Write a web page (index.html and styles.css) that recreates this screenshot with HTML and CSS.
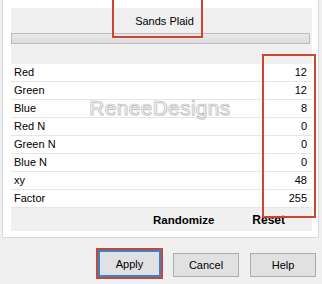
FILE: index.html
```html
<!DOCTYPE html>
<html lang="en">
<head>
    <meta charset="utf-8"/>
    <title>Sands Plaid</title>
    <link rel="stylesheet" href="styles.css">
</head>
<body>
<div class="page">
    <div class="panel">
        <div class="head">
            <div class="title">Sands Plaid</div>
            <div class="bar"></div>
        </div>
        <ul class="params">
            <li><span>Red</span><span>12</span></li>
            <li><span>Green</span><span>12</span></li>
            <li><span>Blue</span><span>8</span></li>
            <li><span>Red N</span><span>0</span></li>
            <li><span>Green N</span><span>0</span></li>
            <li><span>Blue N</span><span>0</span></li>
            <li><span>xy</span><span>48</span></li>
            <li><span>Factor</span><span>255</span></li>
        </ul>
        <div class="actions">
            <span class="randomize">Randomize</span>
            <span class="reset">Reset</span>
        </div>
    </div>
    <!-- watermark over the list -->
    <div class="watermark">ReneeDesigns</div>
</div>

<div class="buttons">
    <button class="btn btn-apply">Apply</button>
    <button class="btn">Cancel</button>
    <button class="btn">Help</button>
</div>

<!-- red annotation frames -->
<div class="mark mark-title"></div>
<div class="mark mark-values"></div>
</body>
</html>
```

FILE: styles.css
```css
* {
    box-sizing: border-box;
}

body {
    margin: 0;
    background-color: #f0f0f0;
    font-family: "Liberation Sans", Arial, sans-serif;
    font-size: 11px;
    color: #000;
    position: relative;
    overflow: hidden;
    height: 284px;
}

.page {
    position: relative;
    margin-left: 2px;
    width: 317px;
    height: 238px;
    padding: 8px 6px 6px 8px;
    background-color: #fff;
    border: 1px solid #d9d9d9;
    border-top: none;
}

.panel {
    width: 301px;
    background-color: #f0f0f0;
}

.head {
    height: 56px;
    padding-top: 6px;
}

.title {
    text-align: center;
    font-size: 11px;
    line-height: 14px;
    padding-left: 6px;
}

.bar {
    margin-top: 5px;
    margin-right: 2px;
    height: 11px;
    border: 1px solid #bcbcbc;
    background: linear-gradient(#e9e9e9, #dcdcdc);
}

.params {
    list-style: none;
    margin: 0;
    padding: 0;
    background-color: #fff;
}

.params li {
    display: flex;
    justify-content: space-between;
    align-items: center;
    height: 18px;
    padding: 0 5px 1px 3px;
    border-bottom: 1px solid #e6e6e6;
}

.actions {
    display: flex;
    justify-content: flex-end;
    align-items: center;
    height: 23px;
    padding-right: 27px;
    font-weight: bold;
    font-size: 11.5px;
}

.reset {
    margin-left: 38px;
    font-size: 12px;
}

.watermark {
    position: absolute;
    left: 86px;
    top: 96px;
    font-size: 21px;
    line-height: 24px;
    color: #f8f8f8;
    -webkit-text-stroke: 0.6px #b4b4b4;
    text-shadow: 1px 1px 0 #e2e2e2;
    letter-spacing: 0.3px;
}

.buttons {
    display: flex;
    justify-content: flex-end;
    align-items: flex-end;
    height: 39px;
    padding-right: 6px;
}

.btn {
    width: 66px;
    height: 24px;
    margin-left: 11px;
    padding: 0;
    font-family: "Liberation Sans", Arial, sans-serif;
    font-size: 11px;
    color: #000;
    background-color: #e1e1e1;
    border: 1px solid #adadad;
}

.btn-apply {
    width: 63px;
    height: 27px;
    margin-left: 0;
    margin-right: 1px;
    border: 2px solid #2f86d6;
    outline: 2px solid #cc4533;
}

.mark {
    position: absolute;
    border: 2px solid #cc4533;
}

.mark-title {
    left: 112px;
    top: -4px;
    width: 91px;
    height: 42px;
}

.mark-values {
    left: 262px;
    top: 54px;
    width: 54px;
    height: 164px;
}
```
